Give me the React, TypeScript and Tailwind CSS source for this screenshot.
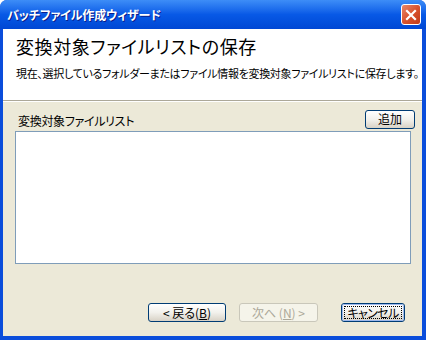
import React from "react";

function XpButton({
  children,
  className = "",
  disabled = false,
  isDefault = false,
}: {
  children: React.ReactNode;
  className?: string;
  disabled?: boolean;
  isDefault?: boolean;
}) {
  if (disabled) {
    return (
      <div
        className={`h-[19px] flex items-center justify-center rounded-[3px] border border-[#C9C7BA] bg-[#F5F4EA] text-[#ACA899] text-[12px] leading-none whitespace-nowrap ${className}`}
      >
        {children}
      </div>
    );
  }
  return (
    <div
      className={`h-[19px] rounded-[3px] border border-[#003C74] bg-gradient-to-b from-white via-[#F2F1EC] to-[#D8D2C6] text-black text-[12px] leading-none whitespace-nowrap ${className}`}
    >
      <div
        className={`h-full w-full flex items-center justify-center rounded-[2px] ${
          isDefault ? "border border-[#9DB8EC] p-[1px]" : ""
        }`}
      >
        {isDefault ? (
          <span className="h-full w-full flex items-center justify-center border border-dotted border-black tracking-[-0.6px]">
            {children}
          </span>
        ) : (
          children
        )}
      </div>
    </div>
  );
}

export default function App() {
  return (
    <div className="w-[426px] h-[340px] flex flex-col overflow-hidden rounded-t-[7px] bg-[#0A4DDB] font-['Noto_Sans_CJK_JP',sans-serif] [font-feature-settings:'palt']">
      {/* Title bar */}
      <div className="h-[29px] shrink-0 flex items-center pl-[7px] pr-[5px] bg-gradient-to-b from-[#3D8DF7] via-[#0859E6] to-[#0047D4]">
        <span className="text-white font-bold text-[12px] tracking-[-0.1px] [text-shadow:1px_1px_0_#0A1E8C]">
          バッチファイル作成ウィザード
        </span>
        <div className="ml-auto w-[20px] h-[21px] rounded-[3px] border border-white bg-gradient-to-br from-[#E8876A] via-[#D9532E] to-[#C13A18] flex items-center justify-center">
          <svg width="12" height="12" viewBox="0 0 12 12">
            <path d="M2 2 L10 10 M10 2 L2 10" stroke="white" strokeWidth="2.2" strokeLinecap="square" />
          </svg>
        </div>
      </div>

      {/* Client area inside frame */}
      <div className="flex-1 flex flex-col pl-[3px] pr-[4px] pb-[4px]">
        <div className="flex-1 flex flex-col bg-[#ECE9D8]">
          {/* Header */}
          <div className="h-[71px] bg-white pl-[13px] pt-[6px]">
            <div className="text-[18px] leading-[22px] tracking-[0.6px] text-black">
              変換対象ファイルリストの保存
            </div>
            <div className="mt-[9px] text-[11px] leading-[14px] tracking-[-0.3px] text-black whitespace-nowrap">
              現在、選択しているフォルダーまたはファイル情報を変換対象ファイルリストに保存します。
            </div>
          </div>
          <div className="h-px bg-[#ACA899]" />
          <div className="h-px bg-white" />

          {/* Content */}
          <div className="pt-[8px] pl-[12px] pr-[11px]">
            <div className="h-[18px] flex items-center">
              <span className="ml-[3px] mt-[4px] text-[12px] tracking-[-0.3px] text-black">変換対象ファイルリスト</span>
              <XpButton className="ml-auto mr-[-4px] w-[50px] h-[18px]">追加</XpButton>
            </div>
            <div className="mt-[3px] h-[133px] w-[396px] bg-white border border-[#7F9DB9]" />
          </div>

          {/* Footer buttons */}
          <div className="mt-[39px] flex items-center pl-[145px]">
            <XpButton className="w-[78px]">
              &lt; 戻る(<span className="underline">B</span>)
            </XpButton>
            <XpButton disabled className="ml-[13px] w-[79px]">
              次へ (<span className="underline">N</span>) &gt;
            </XpButton>
            <XpButton isDefault className="ml-[23px] w-[64px]">
              キャンセル
            </XpButton>
          </div>
        </div>
      </div>
    </div>
  );
}
